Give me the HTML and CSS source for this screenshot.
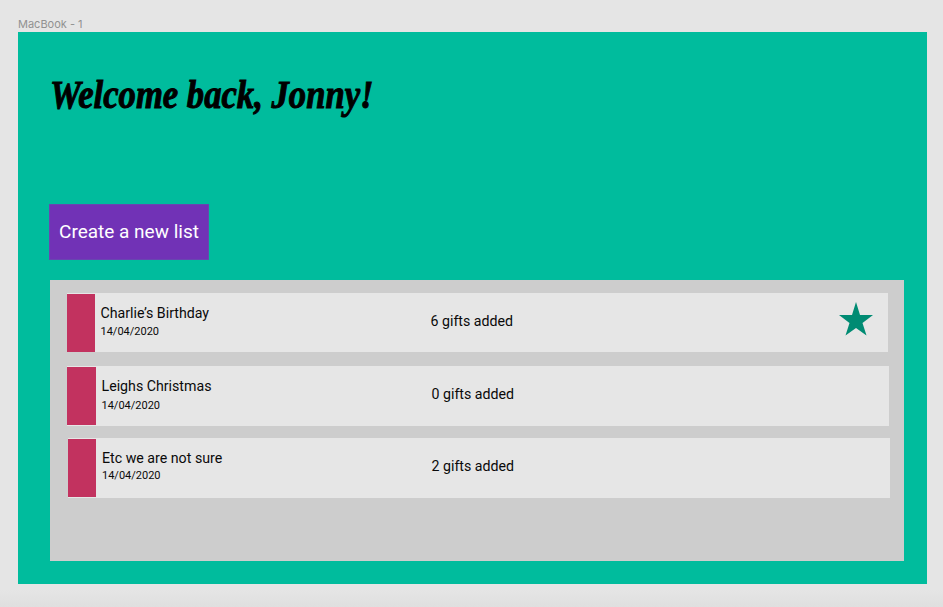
FILE: index.html
```html
<!DOCTYPE html>
<html lang="en">
<head>
<meta charset="utf-8">
<title>Gift lists</title>
<link rel="stylesheet" href="styles.css">
</head>
<body>
<div class="frame-label">MacBook - 1</div>
<main class="frame">
  <h1 class="title">Welcome back, Jonny!</h1>
  <button class="create">Create a new list</button>
  <section class="lists">
    <article class="row row-first">
      <div class="swatch"></div>
      <div class="info"><h2 class="name">Charlie’s Birthday</h2><p class="date">14/04/2020</p></div>
      <div class="count">6 gifts added</div>
      <svg class="star" viewBox="0 0 34 34"><path d="M17 0 21 13H34L23.5 21 27.5 33.5 17 26 6.5 33.5 10.5 21 0 13H13Z"/></svg>
    </article>
    <article class="row row-second">
      <div class="swatch"></div>
      <div class="info"><h2 class="name">Leighs Christmas</h2><p class="date">14/04/2020</p></div>
      <div class="count">0 gifts added</div>
    </article>
    <article class="row row-third">
      <div class="swatch"></div>
      <div class="info"><h2 class="name">Etc we are not sure</h2><p class="date">14/04/2020</p></div>
      <div class="count">2 gifts added</div>
    </article>
  </section>
</main>
</body>
</html>
```
FILE: styles.css
```css
* { box-sizing: border-box; }
body {
  margin: 0;
  height: 607px;
  padding: 16px 16px 0 18px;
  overflow: hidden;
  background: linear-gradient(#e5e5e5 590px, #dfdfdf 607px);
  font-family: Roboto, sans-serif;
  color: #0a0a0a;
}
.frame-label {
  height: 16px;
  font: 11px/16px Inter, sans-serif;
  color: #919191;
}
.frame {
  width: 909px;
  height: 552px;
  padding: 40px 23px 0 32px;
  background: #00bc9d;
}
.title {
  width: max-content;
  height: 48px;
  margin: 0;
  font: italic bold 39px/46px "Liberation Serif", serif;
  color: #000;
  white-space: nowrap;
  -webkit-text-stroke: 1px #000;
  transform-origin: left;
  transform: scaleX(0.888);
}
.create {
  display: block;
  width: 160px;
  height: 56px;
  margin: 84px 0 20px -1px;
  padding: 0;
  border: 1px solid #6846b1;
  background: #7132b6;
  font: 19px/54px Roboto, sans-serif;
  color: #fff;
  white-space: nowrap;
}
.lists {
  width: 854px;
  height: 281px;
  padding: 13px 0 0 17px;
  background: #cdcdcd;
}
.row {
  display: flex;
  width: 821px;
  height: 59px;
  padding-top: 1px;
  background: #e6e6e6;
}
.row-second { width: 822px; height: 60px; margin-top: 14px; }
.row-third { width: 822px; height: 60px; margin: 12px 0 0 1px; }
.swatch { width: 28px; height: 58px; background: #c2325f; }
.row-second .swatch { width: 29px; }
.info { width: 330px; padding: 9px 0 0 5.5px; }
.row-third .info { padding-left: 6px; }
.name, .date { margin: 0; font-weight: 400; }
.name { font-size: 14.2px; line-height: 20px; }
.date { margin-top: 1px; font-size: 11px; line-height: 16px; }
.row-second .date { margin-top: 2px; }
.row-third .date { margin-top: 0; }
.count { width: 414px; padding: 17px 0 0 5.5px; font-size: 14.2px; line-height: 20px; }
.star { flex: none; width: 34px; height: 34px; margin-top: 8px; fill: #008b73; }
```
